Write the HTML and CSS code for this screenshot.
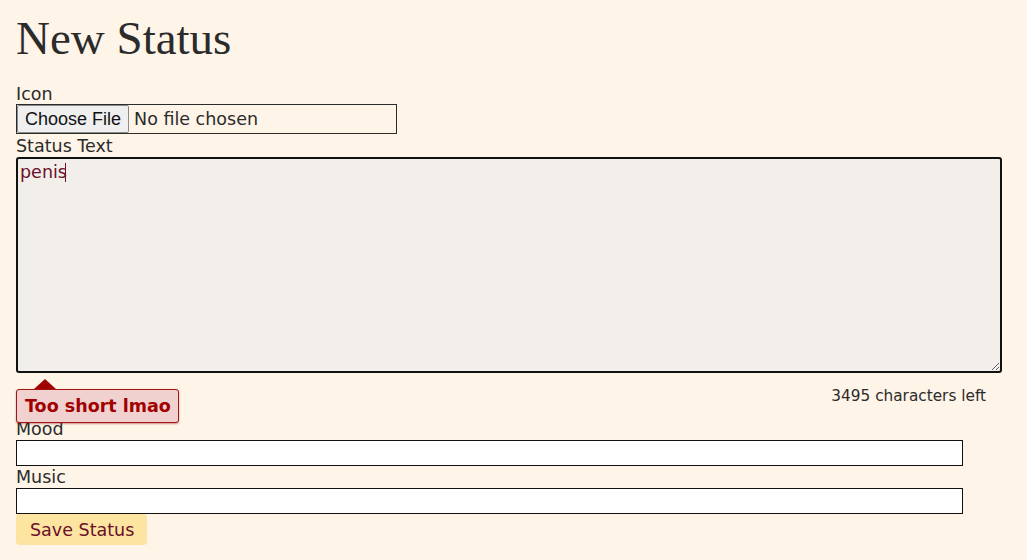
FILE: index.html
```html
<!DOCTYPE html>
<html lang="en">
<head>
    <meta charset="UTF-8">
    <meta name="viewport" content="width=device-width, initial-scale=1.0">
    <title>New Status</title>
    <link rel="stylesheet" href="styles.css">
</head>
<body>
    <div class="container">
        <h1>New Status</h1>

        <form class="status-form" onsubmit="return false">
            <!-- Icon -->
            <label for="icon">Icon</label>
            <input type="file" id="icon" class="file-input">

            <!-- Status text -->
            <label for="statusText">Status Text</label>
            <div class="text-wrap">
                <textarea id="statusText" class="status-text">penis</textarea>
                <span class="caret"></span>
            </div>
            <div class="counter-row">
                <div class="tooltip">Too short lmao</div>
                <span class="counter" id="counter">3495 characters left</span>
            </div>

            <!-- Mood / Music -->
            <label for="mood">Mood</label>
            <input type="text" id="mood" class="text-input">

            <label for="music">Music</label>
            <input type="text" id="music" class="text-input">

            <button type="submit" class="save-btn">Save Status</button>
        </form>
    </div>
</body>
</html>
```

FILE: styles.css
```css
body {
    margin: 0;
    padding: 0;
    background-color: #fef4e8;
    color: #2b2b2b;
    font-family: "DejaVu Sans", Verdana, sans-serif;
    font-size: 17.5px;
}

.container {
    padding: 0 16px;
}

h1 {
    margin: 0;
    padding-top: 13px;
    padding-bottom: 22px;
    font-family: "Liberation Serif", Georgia, serif;
    font-weight: normal;
    font-size: 47px;
    line-height: 50px;
    color: #2b2b2b;
}

.status-form {
    display: flex;
    flex-direction: column;
    align-items: flex-start;
}

.status-form label {
    display: block;
    line-height: 19px;
}

.file-input {
    width: 381px;
    height: 30px;
    box-sizing: border-box;
    margin: 0 0 3px;
    border: 1px solid #2b2b2b;
    font-family: "DejaVu Sans", sans-serif;
    font-size: 17.5px;
    color: #2b2b2b;
    background: transparent;
}

.file-input::file-selector-button {
    font-family: "Liberation Sans", Arial, sans-serif;
    font-size: 18px;
    height: 28px;
    margin: 0 5px 0 0;
    padding: 0 7px;
    border: 1px solid #8a8a8a;
    border-radius: 2px;
    background: #efefef;
    color: #111;
}

.text-wrap {
    position: relative;
    margin-top: 1px;
}

.status-text {
    display: block;
    width: 986px;
    height: 216px;
    box-sizing: border-box;
    margin: 0;
    padding: 3px 2px;
    border: 2px solid #111;
    border-radius: 3px;
    background-color: #f2eeea;
    color: #6b0f2a;
    font-family: "DejaVu Sans", sans-serif;
    font-size: 17.5px;
    line-height: 20px;
    outline: none;
    resize: vertical;
}

.caret {
    position: absolute;
    left: 49px;
    top: 6px;
    width: 1px;
    height: 19px;
    background: #6b0f2a;
}

.counter-row {
    position: relative;
    width: 986px;
    display: flex;
    justify-content: flex-end;
    padding: 14px 0 15px;
}

.counter {
    font-size: 15.3px;
    line-height: 18px;
    padding-right: 16px;
}

.tooltip {
    position: absolute;
    left: 0;
    top: 16px;
    padding: 6px 7px 5px 8px;
    background-color: #f1d0d0;
    border: 1px solid #a31515;
    border-radius: 3px;
    box-shadow: 0 1px 2px rgba(120, 0, 0, 0.4);
    color: #a00000;
    font-weight: bold;
    font-size: 17.5px;
    line-height: 21px;
    white-space: nowrap;
    z-index: 2;
}

.tooltip::before {
    content: '';
    position: absolute;
    left: 17px;
    top: -11px;
    border-left: 11px solid transparent;
    border-right: 11px solid transparent;
    border-bottom: 10px solid #a00000;
}

.text-input {
    width: 947px;
    height: 26px;
    box-sizing: border-box;
    margin: 1px 0 2px;
    border: 1px solid #111;
    background: #fff;
    font-family: "DejaVu Sans", sans-serif;
    font-size: 17.5px;
}

.save-btn {
    margin-top: -2px;
    padding: 0 13px 0 14px;
    height: 31px;
    border: none;
    border-radius: 4px;
    background-color: #fde4a0;
    color: #6b0f2a;
    font-family: "DejaVu Sans", sans-serif;
    font-size: 17.5px;
    cursor: pointer;
}
```
